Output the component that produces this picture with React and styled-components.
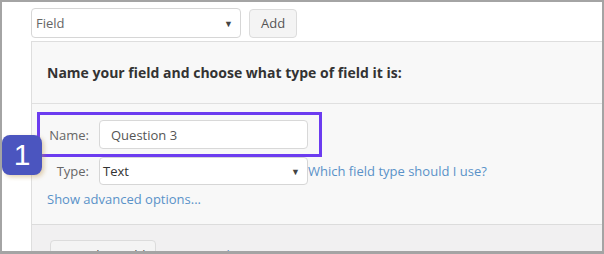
import styled, { createGlobalStyle } from 'styled-components';

const GlobalStyle = createGlobalStyle`
  html, body {
    margin: 0;
    padding: 0;
    background: #fff;
  }
  * {
    box-sizing: border-box;
  }
`;

const Frame = styled.div`
  position: relative;
  width: 604px;
  height: 254px;
  overflow: hidden;
  border: 2px solid #a4a4a4;
  border-bottom-width: 3px;
  background: #fff;
  font-family: "Open Sans", Lato, sans-serif;
  padding: 6px 0 0 29px;
`;

const Toolbar = styled.div`
  display: flex;
  align-items: center;
  gap: 8px;
`;

const Select = styled.div`
  display: flex;
  align-items: center;
  justify-content: space-between;
  width: ${(p) => p.$width}px;
  height: ${(p) => p.$height}px;
  padding: 0 7px 0 ${(p) => p.$pad}px;
  background: #fff;
  border: 1px solid #d6d6d6;
  border-radius: 4px;
  font-size: 13px;
  color: ${(p) => p.$color};
  flex-shrink: 0;
`;

const Caret = styled.span`
  font-size: 9px;
  color: #444;
`;

const Button = styled.div`
  display: flex;
  align-items: center;
  justify-content: center;
  height: 29px;
  padding: 0 ${(p) => p.$pad}px;
  background: #f4f4f4;
  border: 1px solid #dcdcdc;
  border-radius: 4px;
  font-size: 13px;
  color: #555;
  white-space: nowrap;
`;

const Panel = styled.div`
  margin-top: 3px;
  border: 1px solid #dedede;
  border-right: none;
  background: #f8f8f8;
`;

const PanelHeader = styled.div`
  height: 62px;
  display: flex;
  align-items: center;
  padding: 0 15px;
  font-size: 14px;
  font-weight: 700;
  color: #333;
  border-bottom: 1px solid #e0e0e0;
`;

const PanelBody = styled.div`
  padding: 8px 0 16px;
`;

const FieldRow = styled.div`
  display: flex;
  align-items: center;
  margin-left: 5px;
  width: 285px;
  border: 3px solid ${(p) => (p.$highlight ? '#6c3cf0' : 'transparent')};
  border-width: ${(p) => (p.$highlight ? '3px' : '0 3px')};
  padding: ${(p) => (p.$highlight ? '5px 11px 5px 8px' : '0 11px 0 8px')};
  gap: 10px;
  white-space: nowrap;
`;

const Label = styled.label`
  width: 41px;
  flex-shrink: 0;
  text-align: right;
  font-size: 13px;
  color: #666;
`;

const Input = styled.div`
  width: 209px;
  height: 29px;
  flex-shrink: 0;
  display: flex;
  align-items: center;
  padding: 0 11px;
  background: #fff;
  border: 1px solid #d8d8d8;
  border-radius: 4px;
  font-size: 13px;
  color: #555;
`;

const Link = styled.a`
  font-size: 13px;
  color: #5a92c8;
  text-decoration: none;
  cursor: pointer;
  margin-left: ${(p) => p.$offset || 0}px;
`;

const AdvancedLink = styled(Link)`
  display: block;
  margin: 6px 0 0 15px;
  line-height: 17px;
`;

const PanelFooter = styled.div`
  display: flex;
  align-items: center;
  gap: 34px;
  padding: 15px 18px;
  border-top: 1px solid #dcdcdc;
  background: #f1f0f1;
`;

const Badge = styled.div`
  position: absolute;
  left: 0;
  top: 133px;
  width: 40px;
  height: 40px;
  display: flex;
  align-items: center;
  justify-content: center;
  background: #4b55bf;
  border-radius: 8px;
  color: #fff;
  font-family: "Liberation Sans", Arial, sans-serif;
  font-size: 30px;
  box-shadow: 2px 2px 4px rgba(190, 150, 80, 0.45);
`;

const App = () => (
  <>
    <GlobalStyle />
    <Frame>
      <Toolbar>
        <Select $width={210} $height={30} $pad={4} $color="#666">
          Field
          <Caret>▼</Caret>
        </Select>
        <Button $pad={11}>Add</Button>
      </Toolbar>
      <Panel>
        <PanelHeader>Name your field and choose what type of field it is:</PanelHeader>
        <PanelBody>
          <FieldRow $highlight>
            <Label>Name:</Label>
            <Input>Question 3</Input>
          </FieldRow>
          <FieldRow>
            <Label>Type:</Label>
            <Select $width={209} $height={28} $pad={3} $color="#333">
              Text
              <Caret>▼</Caret>
            </Select>
            <Link $offset={-10}>Which field type should I use?</Link>
          </FieldRow>
          <AdvancedLink>Show advanced options...</AdvancedLink>
        </PanelBody>
        <PanelFooter>
          <Button $pad={9}>Save this Field</Button>
          <Link>Cancel</Link>
        </PanelFooter>
      </Panel>
      <Badge>1</Badge>
    </Frame>
  </>
);

export default App;
